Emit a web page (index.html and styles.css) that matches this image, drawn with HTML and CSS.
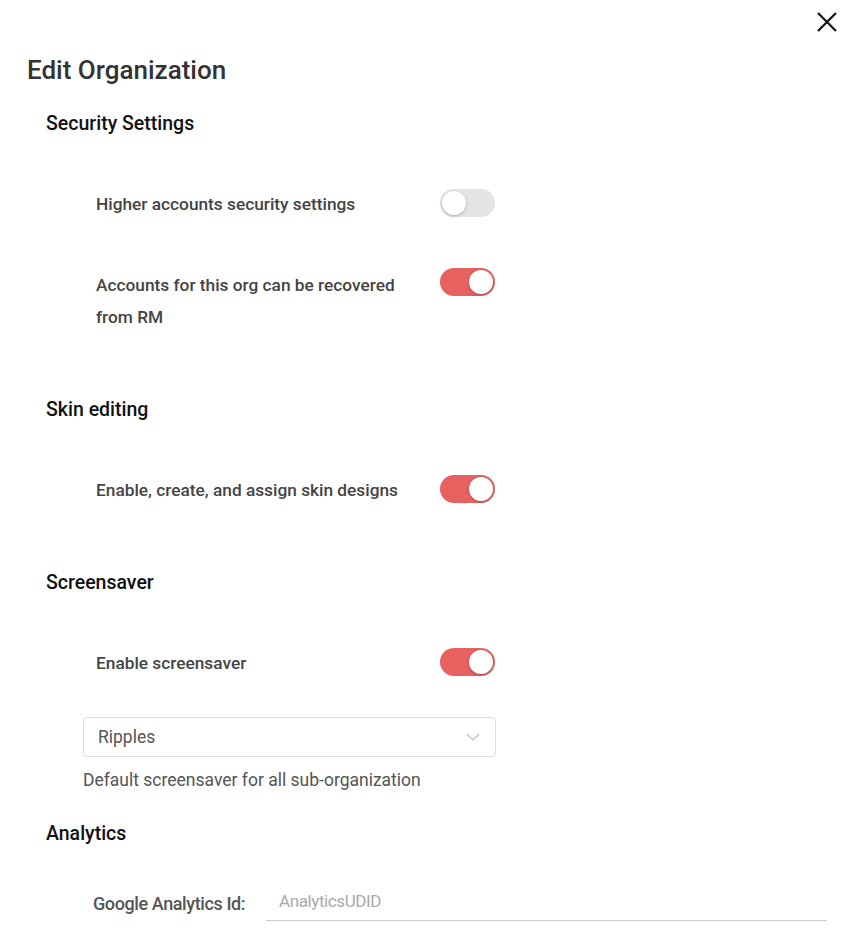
FILE: index.html
```html
<!DOCTYPE html>
<html>
<head>
<meta charset="utf-8">
<link rel="stylesheet" href="styles.css">
</head>
<body>
<div class="dialog">
  <button class="close" aria-label="Close">
    <svg width="20" height="20" viewBox="0 0 20 20"><path d="M1 1 L19 19 M19 1 L1 19" stroke="#111" stroke-width="2.2" fill="none"/></svg>
  </button>
  <h1 class="title">Edit Organization</h1>

  <h2 class="section-title first">Security Settings</h2>
  <div class="row row-first">
    <span class="label">Higher accounts security settings</span>
    <span class="toggle"><span class="knob"></span></span>
  </div>
  <div class="row row-next row-top">
    <span class="label">Accounts for this org can be recovered from RM</span>
    <span class="toggle on"><span class="knob"></span></span>
  </div>

  <h2 class="section-title">Skin editing</h2>
  <div class="row row-first">
    <span class="label">Enable, create, and assign skin designs</span>
    <span class="toggle on"><span class="knob"></span></span>
  </div>

  <h2 class="section-title">Screensaver</h2>
  <div class="row row-first">
    <span class="label">Enable screensaver</span>
    <span class="toggle on"><span class="knob"></span></span>
  </div>
  <div class="select">
    <span class="select-value">Ripples</span>
    <svg class="chevron" width="14" height="8" viewBox="0 0 14 8"><path d="M1 1 L7 7 L13 1" stroke="#bdbdbd" stroke-width="1.2" fill="none"/></svg>
  </div>
  <div class="helper">Default screensaver for all sub-organization</div>

  <h2 class="section-title analytics">Analytics</h2>
  <div class="field">
    <span class="field-label">Google Analytics Id:</span>
    <span class="field-input">AnalyticsUDID</span>
  </div>
</div>
</body>
</html>
```
FILE: styles.css
```css
html, body {
  margin: 0;
  padding: 0;
  background: #fff;
}
body {
  font-family: Roboto, "Liberation Sans", sans-serif;
  width: 843px;
  height: 940px;
  overflow: hidden;
}
.dialog {
  position: relative;
  padding: 54px 0 0 27px;
}
.close {
  position: absolute;
  top: 12px;
  right: 6px;
  border: 0;
  background: none;
  padding: 0;
  width: 20px;
  height: 20px;
  display: block;
}
.close svg { display: block; }
.title {
  margin: 0;
  font-size: 26px;
  line-height: 32px;
  font-weight: 500;
  color: #333;
}
.section-title {
  margin: 65px 0 0 19px;
  font-size: 19.5px;
  line-height: 24px;
  font-weight: 500;
  color: #111;
}
.section-title.first { margin-top: 26px; }
.section-title.analytics { margin-top: 30px; }
.row {
  display: flex;
  align-items: center;
  padding-left: 69px;
}
.row-first { margin-top: 52px; }
.row-next { margin-top: 49px; }
.row .toggle { margin-bottom: 3px; }
.row-top { align-items: flex-start; }
.row-top .toggle { margin: -1px 0 0 0; }
.label {
  width: 344px;
  font-size: 17.3px;
  line-height: 32px;
  font-weight: 500;
  color: #444;
  padding-right: 30px;
  box-sizing: border-box;
}
.toggle {
  position: relative;
  width: 55px;
  height: 28px;
  border-radius: 14px;
  background: #e4e4e4;
  flex: none;
}
.toggle .knob {
  position: absolute;
  top: 2px;
  left: 2px;
  width: 24px;
  height: 24px;
  border-radius: 50%;
  background: #fff;
  box-shadow: 0 1px 3px rgba(0,0,0,0.25);
}
.toggle.on { background: #e86161; }
.toggle.on .knob { left: 29px; }
.select {
  margin: 38px 0 0 56px;
  width: 413px;
  height: 40px;
  box-sizing: border-box;
  border: 1px solid #dcdcdc;
  border-radius: 4px;
  display: flex;
  align-items: center;
  justify-content: space-between;
  padding: 0 15px 0 14px;
}
.select-value {
  font-size: 17.5px;
  color: #555;
}
.chevron { display: block; }
.helper {
  margin: 11px 0 0 56px;
  font-size: 17.5px;
  line-height: 24px;
  color: #555;
}
.field {
  display: flex;
  align-items: center;
  margin: 39px 0 0 66px;
  height: 36px;
}
.field-label {
  width: 173px;
  font-size: 18px;
  font-weight: 500;
  color: #555;
  letter-spacing: -0.4px;
}
.field-input {
  width: 561px;
  height: 36px;
  box-sizing: border-box;
  border-bottom: 1px solid #ccc;
  padding: 6px 0 0 13px;
  font-size: 17px;
  color: #aaa;
  letter-spacing: -0.4px;
}
```
